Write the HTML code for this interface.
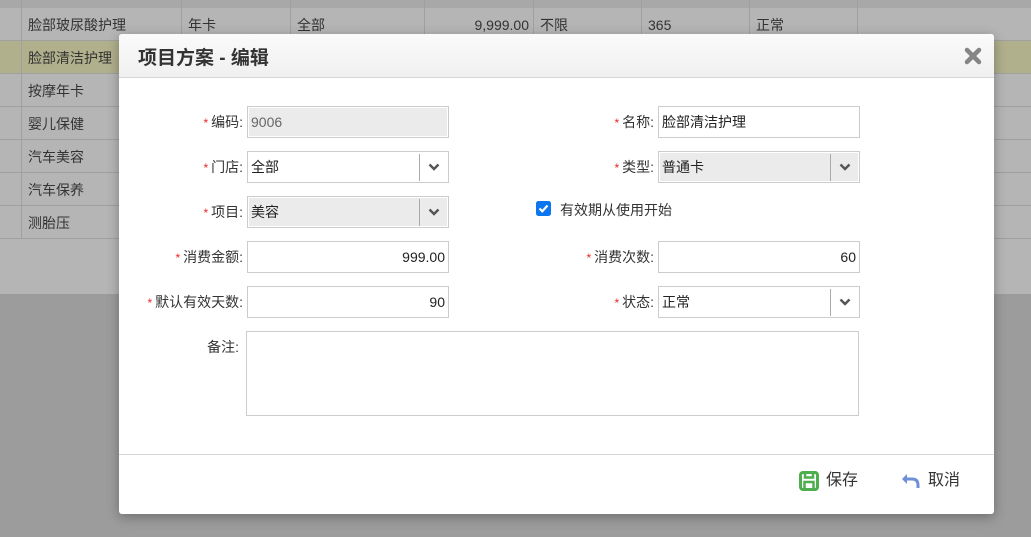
<!DOCTYPE html>
<html><head><meta charset="utf-8"><style>
*{box-sizing:border-box;margin:0;padding:0}
body{width:1031px;height:537px;overflow:hidden;position:relative;background:#9c9c9c;font-family:"Liberation Sans","Noto Sans CJK SC",sans-serif;font-size:14px;color:#333}
.tbl{position:absolute;left:0;top:0;width:1031px;height:294px;background:#b5b5b5}
.hl{position:absolute;left:0;width:1031px;height:8px;background:#a8a8a8}
.row{position:absolute;left:0;width:1031px;height:33px;border-bottom:1px solid #a0a0a0}
.vl{position:absolute;top:0;width:1px;height:239px;background:#a0a0a0}
.c{position:absolute;font-size:14px;color:#333;line-height:33px}
.modal{position:absolute;left:119px;top:34px;width:875px;height:480px;background:#fff;border-radius:3px;box-shadow:0 3px 12px rgba(0,0,0,.3)}
.hd{position:absolute;left:0;top:0;width:875px;height:44px;background:linear-gradient(#fafafa,#f0f0f0);border-bottom:1px solid #d6d6d6;border-radius:3px 3px 0 0}
.hd .t{position:absolute;left:19px;top:9px;font-size:19px;font-weight:bold;color:#333}
.lb{position:absolute;text-align:right;font-size:14px;color:#333;line-height:32px}
.lb i{color:#e22;font-style:normal;font-size:12px;margin-right:3px}
.in{position:absolute;width:202px;height:32px;border:1px solid #ccc;line-height:30px;padding:0 3px;font-size:14px;color:#222;background:#fff}
.gr{background:#ebebeb;border:1px solid #ccc;box-shadow:inset 0 0 0 1px #fff}
.r{text-align:right}
.dd{position:absolute;right:0;top:2px;width:29px;height:27px;border-left:1px solid #aaa}
.dd svg{position:absolute;left:8px;top:9px}
</style></head><body>
<div class="tbl">
<div class="hl" style="top:0"></div>
<div class="row" style="top:8px"></div>
<div class="row" style="top:41px;background:#b0b08c"></div>
<div class="row" style="top:74px"></div>
<div class="row" style="top:107px"></div>
<div class="row" style="top:140px"></div>
<div class="row" style="top:173px"></div>
<div class="row" style="top:206px"></div>
<div class="vl" style="left:21px"></div><div class="vl" style="left:181px"></div><div class="vl" style="left:290px"></div><div class="vl" style="left:424px"></div><div class="vl" style="left:533px"></div><div class="vl" style="left:641px"></div><div class="vl" style="left:749px"></div><div class="vl" style="left:857px"></div>
<div class="c" style="left:28px;top:9px">脸部玻尿酸护理</div>
<div class="c" style="left:188px;top:9px">年卡</div>
<div class="c" style="left:297px;top:9px">全部</div>
<div class="c" style="left:430px;top:9px;width:99px;text-align:right">9,999.00</div>
<div class="c" style="left:540px;top:9px">不限</div>
<div class="c" style="left:648px;top:9px">365</div>
<div class="c" style="left:756px;top:9px">正常</div>
<div class="c" style="left:28px;top:42px">脸部清洁护理</div>
<div class="c" style="left:28px;top:75px">按摩年卡</div>
<div class="c" style="left:28px;top:108px">婴儿保健</div>
<div class="c" style="left:28px;top:141px">汽车美容</div>
<div class="c" style="left:28px;top:174px">汽车保养</div>
<div class="c" style="left:28px;top:207px">测胎压</div>
</div>
<div class="modal">
<div class="hd"><div class="t">项目方案 - 编辑</div>
<svg style="position:absolute;left:845px;top:13px" width="18" height="18" viewBox="0 0 18 18"><path d="M3 3L15 15M15 3L3 15" stroke="#858585" stroke-width="4.5" stroke-linecap="round"/></svg></div>

<div class="lb" style="left:0;top:72px;width:124px"><i>*</i>编码:</div>
<div class="in gr" style="left:128px;top:72px;color:#666">9006</div>
<div class="lb" style="left:400px;top:72px;width:135px"><i>*</i>名称:</div>
<div class="in" style="left:539px;top:72px">脸部清洁护理</div>

<div class="lb" style="left:0;top:117px;width:124px"><i>*</i>门店:</div>
<div class="in" style="left:128px;top:117px">全部<div class="dd"><svg width="12" height="8" viewBox="0 0 12 8"><path d="M1.5 1.5L6 6L10.5 1.5" stroke="#555" stroke-width="2.4" fill="none"/></svg></div></div>
<div class="lb" style="left:400px;top:117px;width:135px"><i>*</i>类型:</div>
<div class="in gr" style="left:539px;top:117px">普通卡<div class="dd"><svg width="12" height="8" viewBox="0 0 12 8"><path d="M1.5 1.5L6 6L10.5 1.5" stroke="#555" stroke-width="2.4" fill="none"/></svg></div></div>

<div class="lb" style="left:0;top:162px;width:124px"><i>*</i>项目:</div>
<div class="in gr" style="left:128px;top:162px">美容<div class="dd"><svg width="12" height="8" viewBox="0 0 12 8"><path d="M1.5 1.5L6 6L10.5 1.5" stroke="#555" stroke-width="2.4" fill="none"/></svg></div></div>
<svg style="position:absolute;left:417px;top:167px" width="15" height="15" viewBox="0 0 15 15"><rect width="15" height="15" rx="2.5" fill="#0b76f0"/><path d="M3.5 7.5L6.3 10.3L11.5 4.5" stroke="#fff" stroke-width="2.2" fill="none"/></svg>
<div class="lb" style="left:441px;top:160px">有效期从使用开始</div>

<div class="lb" style="left:0;top:207px;width:124px"><i>*</i>消费金额:</div>
<div class="in r" style="left:128px;top:207px">999.00</div>
<div class="lb" style="left:400px;top:207px;width:135px"><i>*</i>消费次数:</div>
<div class="in r" style="left:539px;top:207px">60</div>

<div class="lb" style="left:0;top:252px;width:124px"><i>*</i>默认有效天数:</div>
<div class="in r" style="left:128px;top:252px">90</div>
<div class="lb" style="left:400px;top:252px;width:135px"><i>*</i>状态:</div>
<div class="in" style="left:539px;top:252px">正常<div class="dd"><svg width="12" height="8" viewBox="0 0 12 8"><path d="M1.5 1.5L6 6L10.5 1.5" stroke="#555" stroke-width="2.4" fill="none"/></svg></div></div>

<div class="lb" style="left:0;top:303px;width:120px;line-height:20px">备注:</div>
<div class="in" style="left:127px;top:297px;width:613px;height:85px"></div>

<div style="position:absolute;left:0;top:420px;width:875px;height:1px;background:#d6d6d6"></div>
<svg style="position:absolute;left:680px;top:437px" width="20" height="20" viewBox="0 0 20 20"><rect x="1.5" y="1.5" width="17" height="17" rx="2.5" fill="none" stroke="#4cae4c" stroke-width="3"/><rect x="6" y="1.5" width="8" height="5" fill="none" stroke="#4cae4c" stroke-width="2.5"/><rect x="5.5" y="11" width="9" height="7.5" fill="none" stroke="#4cae4c" stroke-width="2.5"/></svg>
<div class="lb" style="left:707px;top:431px;font-size:16px">保存</div>
<svg style="position:absolute;left:782px;top:439px" width="19" height="16" viewBox="0 0 19 16"><path d="M6 1L1 6L6 11Z" fill="#6f8fd6"/><path d="M5 6H11Q17 6 17 12V15" stroke="#6f8fd6" stroke-width="3" fill="none"/></svg>
<div class="lb" style="left:809px;top:431px;font-size:16px">取消</div>
</div>
</body></html>
